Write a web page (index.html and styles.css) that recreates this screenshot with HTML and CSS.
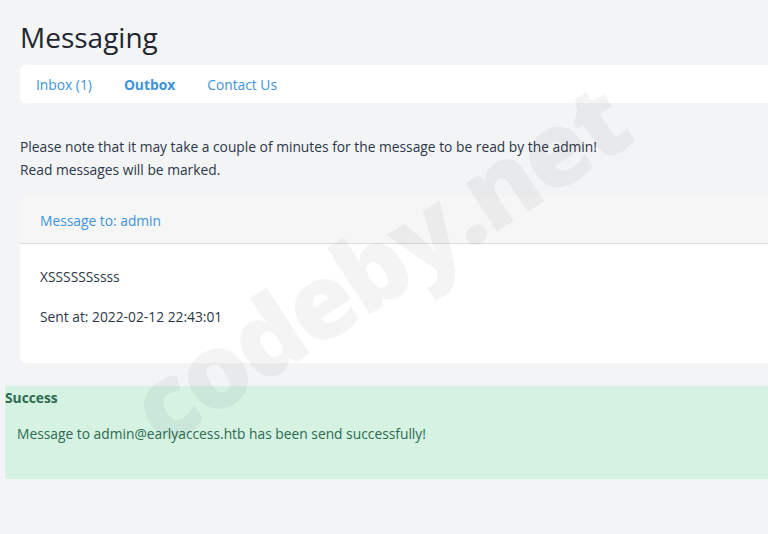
FILE: index.html
```html
<!DOCTYPE html>
<html lang="en">
<head>
    <meta charset="UTF-8">
    <meta name="viewport" content="width=device-width, initial-scale=1.0">
    <title>Messaging</title>
    <link rel="stylesheet" href="styles.css">
</head>
<body>
    <div class="page">
        <h1 class="title">Messaging</h1>
        <div class="nav">
            <a href="#">Inbox (1)</a>
            <a href="#" class="active">Outbox</a>
            <a href="#">Contact Us</a>
        </div>
        <p class="note">
            Please note that it may take a couple of minutes for the message to be read by the admin!<br>
            Read messages will be marked.
        </p>
        <div class="card">
            <div class="card-header">
                <a href="#">Message to: admin</a>
            </div>
            <div class="card-body">
                <p>XSSSSSSssss</p>
                <p>Sent at: 2022-02-12 22:43:01</p>
            </div>
        </div>
    </div>
    <div class="alert">
        <div class="alert-title">Success</div>
        <p>Message to admin@earlyaccess.htb has been send successfully!</p>
    </div>
    <div class="watermark">codeby.net</div>
</body>
</html>
```

FILE: styles.css
```css
body, html {
    margin: 0;
    padding: 0;
}
body {
    font-family: "Open Sans", "Noto Sans", sans-serif;
    font-size: 13.8px;
    color: #2d3748;
    background-color: #f3f4f6;
    width: 768px;
    height: 534px;
    overflow: hidden;
    position: relative;
}
a {
    color: #3d94dd;
    text-decoration: none;
}
.page {
    padding: 17px 0 0 20px;
    width: 748px;
}
.title {
    margin: 0 0 8px;
    font-size: 28px;
    font-weight: 400;
    line-height: 40px;
    color: #22262e;
}
.nav {
    background-color: #ffffff;
    border-radius: 6px 0 0 6px;
    height: 38px;
    display: flex;
    align-items: center;
    padding-left: 16px;
    gap: 32px;
}
.nav a.active {
    font-weight: 700;
}
.note {
    margin: 32px 0 16px;
    line-height: 23px;
}
.card {
    background-color: #ffffff;
    border-radius: 6px 0 0 6px;
    overflow: hidden;
}
.card-header {
    background-color: #f6f6f7;
    border-bottom: 1px solid #dcdcdc;
    height: 46px;
    display: flex;
    align-items: center;
    padding-left: 20px;
}
.card-body {
    padding: 23px 20px 36px;
}
.card-body p {
    margin: 0;
    line-height: 20px;
}
.card-body p + p {
    margin-top: 20px;
}
.alert {
    margin: 23px 0 0 5px;
    height: 93px;
    background-color: #d5f2e3;
    color: #2c6b50;
}
.alert-title {
    font-weight: 700;
    line-height: 22px;
    padding-top: 1px;
}
.alert p {
    margin: 15px 0 0 12px;
}
.watermark {
    position: absolute;
    left: 140px;
    top: 364px;
    font-family: "Open Sans", sans-serif;
    font-weight: 800;
    font-size: 104px;
    line-height: 1;
    letter-spacing: -3px;
    color: rgba(0, 0, 0, 0.045);
    transform: rotate(-33deg);
    transform-origin: left center;
    white-space: nowrap;
    pointer-events: none;
}
```
